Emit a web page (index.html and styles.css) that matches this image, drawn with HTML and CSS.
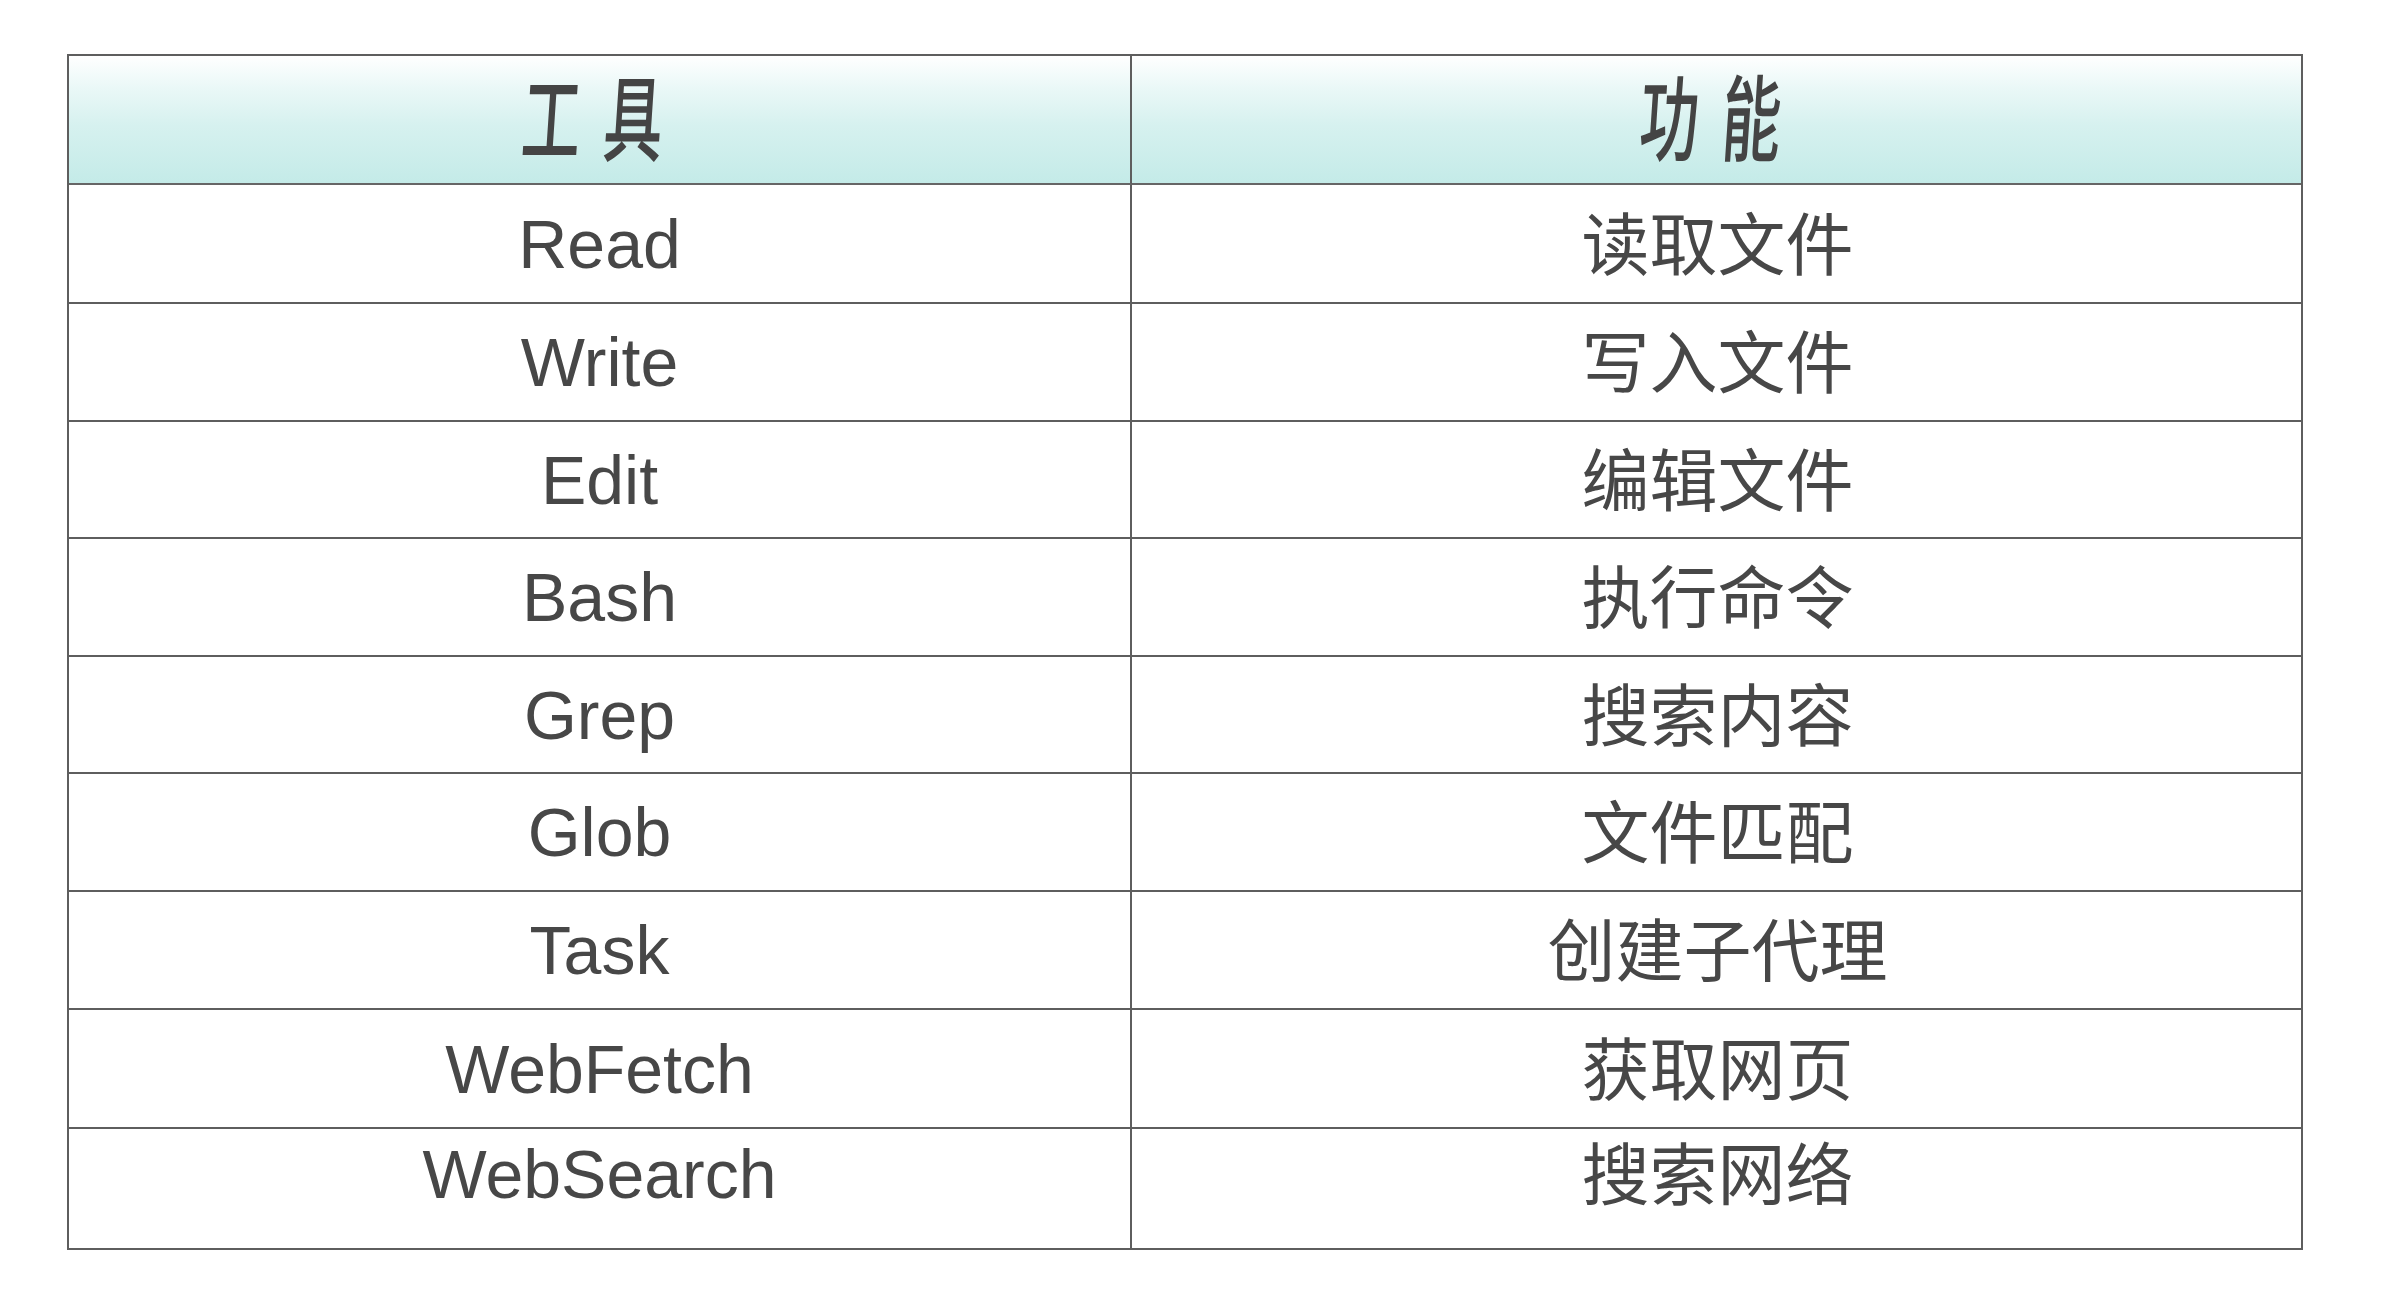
FILE: index.html
```html
<!DOCTYPE html>
<html lang="zh-CN">
<head>
<meta charset="utf-8">
<title>工具 功能</title>
<link rel="stylesheet" href="styles.css">
</head>
<body>
<div class="table">
  <div class="cell head"><span class="htext"><span>工</span><span>具</span></span></div>
  <div class="cell head last-col"><span class="htext"><span>功</span><span>能</span></span></div>

  <div class="cell">Read</div><div class="cell last-col">读取文件</div>
  <div class="cell">Write</div><div class="cell last-col">写入文件</div>
  <div class="cell">Edit</div><div class="cell last-col">编辑文件</div>
  <div class="cell">Bash</div><div class="cell last-col">执行命令</div>
  <div class="cell">Grep</div><div class="cell last-col">搜索内容</div>
  <div class="cell">Glob</div><div class="cell last-col">文件匹配</div>
  <div class="cell">Task</div><div class="cell last-col">创建子代理</div>
  <div class="cell">WebFetch</div><div class="cell last-col">获取网页</div>
  <div class="cell last-row">WebSearch</div><div class="cell last-col last-row">搜索网络</div>
</div>
</body>
</html>
```
FILE: styles.css
```css
html, body {
  margin: 0;
  padding: 0;
  background: #ffffff;
}

body {
  padding: 54px 0 0 67px;
  font-family: "Liberation Sans", "Noto Sans CJK SC", sans-serif;
  color: #474747;
}

.table {
  display: grid;
  box-sizing: border-box;
  width: 2236px;
  grid-template-columns: 1063px 1fr;
  grid-template-rows: 129px 119px 118px 117px 118px 117px 118px 118px 119px 119px;
  border: 2px solid #5e5e5e;
}

.cell {
  display: flex;
  align-items: center;
  justify-content: center;
  font-size: 68px;
  border-right: 2px solid #5e5e5e;
  border-bottom: 2px solid #5e5e5e;
  box-sizing: border-box;
  white-space: nowrap;
}

.cell.last-col {
  border-right: none;
  padding-left: 2px;
  padding-bottom: 7px;
}

.cell.last-row {
  border-bottom: none;
  padding-bottom: 30px;
}

.cell.last-col.last-row {
  padding-bottom: 36px;
}

.head {
  background: linear-gradient(180deg, #ffffff 0%, #eaf8f7 25%, #d6f1ef 55%, #c4ebe8 100%);
  border-bottom-color: #666666;
}

.cell.head {
  padding-bottom: 14px;
  padding-right: 12px;
}

.htext {
  display: inline-flex;
  gap: 36px;
  font-family: "Noto Sans CJK SC", sans-serif;
  font-weight: 500;
  font-size: 94px;
  line-height: 1;
  color: #444444;
  transform: scaleX(0.63) skewX(-6deg);
}
```
